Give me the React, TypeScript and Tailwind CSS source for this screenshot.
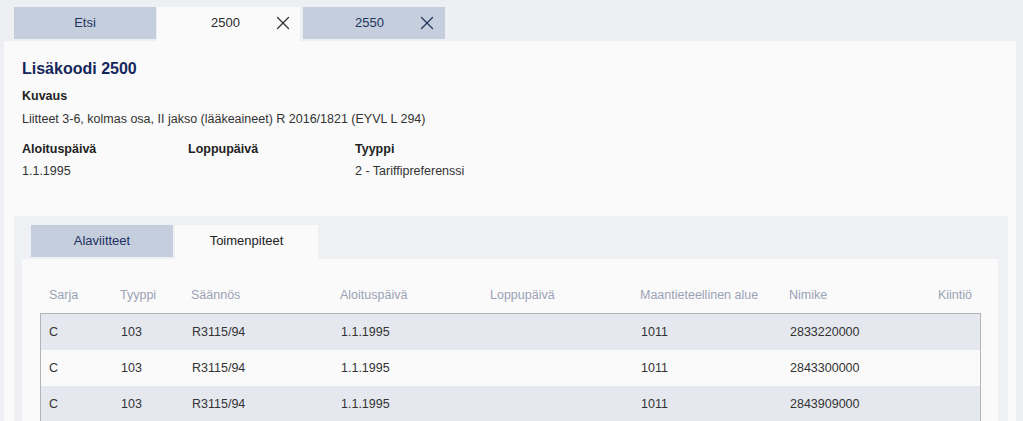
import { X } from "lucide-react";

const rows = [
  { sarja: "C", tyyppi: "103", saannos: "R3115/94", alku: "1.1.1995", loppu: "", alue: "1011", nimike: "2833220000", kiintio: "" },
  { sarja: "C", tyyppi: "103", saannos: "R3115/94", alku: "1.1.1995", loppu: "", alue: "1011", nimike: "2843300000", kiintio: "" },
  { sarja: "C", tyyppi: "103", saannos: "R3115/94", alku: "1.1.1995", loppu: "", alue: "1011", nimike: "2843909000", kiintio: "" },
];

const cols = "grid grid-cols-[71px_71px_149px_150px_150px_149px_1fr_auto]";

const TopTab = ({ label, active, closable }: { label: string; active?: boolean; closable?: boolean }) => {
  if (!closable) {
    return (
      <div className="flex h-[32px] w-[142px] items-center justify-center bg-[#c4cedd] text-[13px] text-[#24345c]">
        {label}
      </div>
    );
  }
  return (
    <div
      className={
        active
          ? "flex h-[34px] w-[143px] items-center justify-between bg-[#fafafa] pb-[2px] pl-[54px] pr-[6px] text-[13px] text-[#2a2a2a]"
          : "flex h-[32px] w-[142px] items-center justify-between bg-[#c4cedd] pl-[52px] pr-[7px] text-[13px] text-[#24345c]"
      }
    >
      <span>{label}</span>
      <X size={22} strokeWidth={1.4} className={active ? "text-[#333]" : "text-[#24345c]"} />
    </div>
  );
};

export default function App() {
  return (
    <div className="min-h-screen bg-[#eeeff2] pl-1 pr-[7px] pt-[7px] font-['Liberation_Sans',Arial,sans-serif]">
      <div className="flex items-start gap-[1px] pl-[10px]">
        <TopTab label="Etsi" />
        <TopTab label="2500" active closable />
        <div className="w-[1px]" />
        <TopTab label="2550" closable />
      </div>

      <div className="bg-[#fafafa] pb-4 pl-[10px] pr-[8px] pt-[18px]">
        <div className="px-2">
          <h1 className="h-[20px] text-[16px] font-bold leading-[20px] text-[#15275a]">Lisäkoodi 2500</h1>
          <div className="mt-[8px] text-[12.5px] font-bold leading-[18px] text-[#222]">Kuvaus</div>
          <div className="mt-[5px] text-[12.5px] leading-[18px] text-[#333]">
            Liitteet 3-6, kolmas osa, II jakso (lääkeaineet) R 2016/1821 (EYVL L 294)
          </div>
          <div className="mt-[12px] grid grid-cols-[166px_167px_1fr] text-[12.5px] leading-[18px]">
            <div className="font-bold text-[#222]">Aloituspäivä</div>
            <div className="font-bold text-[#222]">Loppupäivä</div>
            <div className="font-bold text-[#222]">Tyyppi</div>
            <div className="mt-[4px] text-[#333]">1.1.1995</div>
            <div className="mt-[4px] text-[#333]"></div>
            <div className="mt-[4px] text-[#333]">2 - Tariffipreferenssi</div>
          </div>
        </div>

        <div className="mt-[36px] bg-[#eef0f3] pb-4 pl-[8px] pr-[10px] pt-[9px]">
          <div className="flex items-start gap-[2px] pl-[9px]">
            <div className="flex h-[32px] w-[142px] items-center justify-center bg-[#c4cedd] text-[13px] text-[#1f3060]">
              Alaviitteet
            </div>
            <div className="flex h-[34px] w-[143px] items-center justify-center bg-[#fafafa] pb-[2px] text-[13px] text-[#222]">
              Toimenpiteet
            </div>
          </div>
          <div className="bg-[#fafafa] pb-4 pl-[18px] pr-[17px] pt-[18px]">
            <div className={`${cols} h-[36px] items-center text-[12.5px] text-[#9aa2b5]`}>
              <div className="pl-[9px]">Sarja</div>
              <div className="pl-[9px]">Tyyppi</div>
              <div className="pl-[9px]">Säännös</div>
              <div className="pl-[9px]">Aloituspäivä</div>
              <div className="pl-[9px]">Loppupäivä</div>
              <div className="pl-[9px]">Maantieteellinen alue</div>
              <div className="pl-[9px]">Nimike</div>
              <div className="pr-[9px] text-right">Kiintiö</div>
            </div>
            <div className="border border-[#b4b4b4]">
              {rows.map((r, i) => (
                <div
                  key={i}
                  className={`${cols} h-[36px] items-center text-[12.5px] text-[#333] ${i % 2 === 0 ? "bg-[#e5e8ee]" : "bg-[#fafafa]"}`}
                >
                  <div className="pl-[8px]">{r.sarja}</div>
                  <div className="pl-[9px]">{r.tyyppi}</div>
                  <div className="pl-[9px]">{r.saannos}</div>
                  <div className="pl-[9px]">{r.alku}</div>
                  <div className="pl-[9px]">{r.loppu}</div>
                  <div className="pl-[9px]">{r.alue}</div>
                  <div className="pl-[9px]">{r.nimike}</div>
                  <div className="pr-[9px] text-right">{r.kiintio}</div>
                </div>
              ))}
            </div>
          </div>
        </div>
      </div>
    </div>
  );
}
